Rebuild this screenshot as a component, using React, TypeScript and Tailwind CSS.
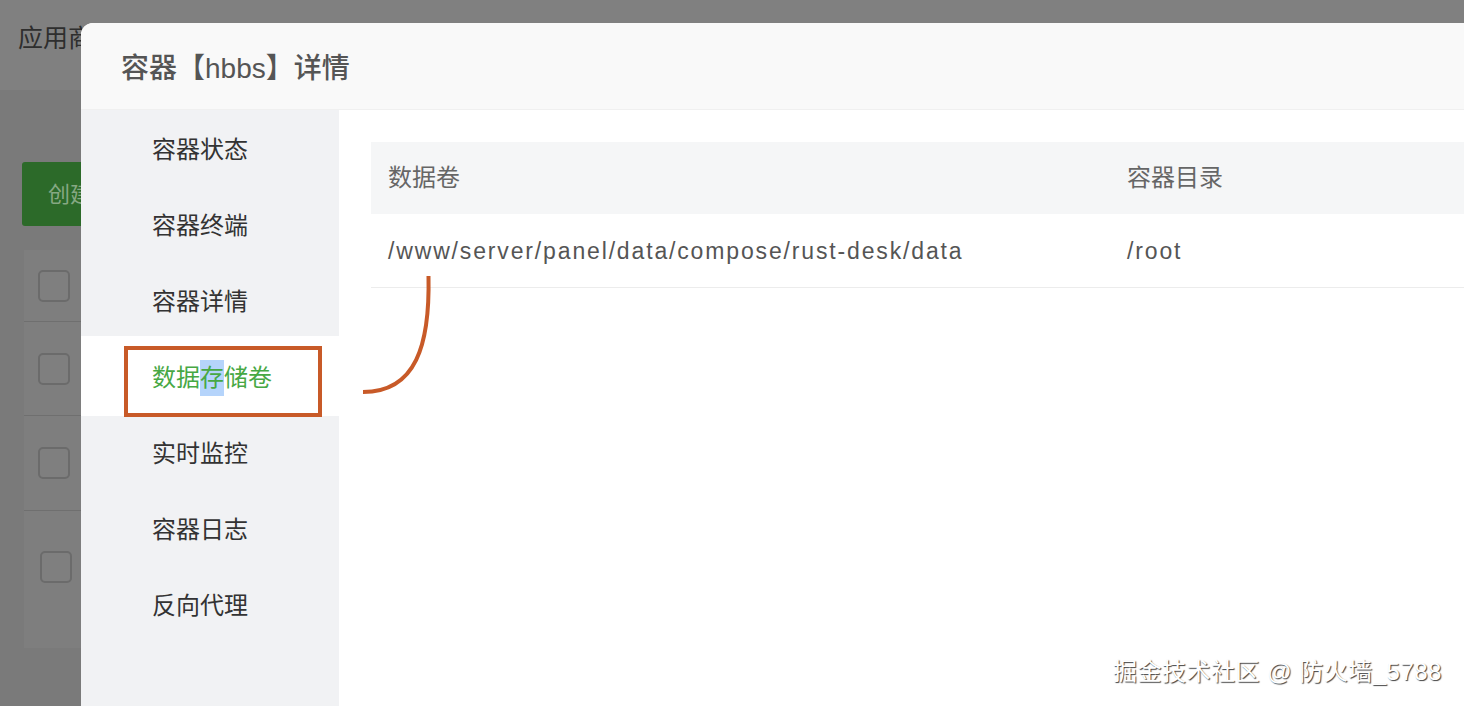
import React from "react";

const menu = ["容器状态", "容器终端", "容器详情", "数据存储卷", "实时监控", "容器日志", "反向代理"];

export default function App() {
  return (
    <div
      className="relative w-[1464px] h-[706px] overflow-hidden bg-[#7a7a7a]"
      style={{ fontFamily: '"Liberation Sans", "Noto Sans CJK SC", sans-serif' }}
    >
      {/* background page (dimmed) */}
      <div className="h-[90px] bg-[#808080] pl-[18px] pt-[20px] text-[25px] text-[#2e2e2e] whitespace-nowrap">应用商店</div>
      <div className="pl-[22px] pt-[72px]">
        <div className="w-[130px] h-[64px] rounded-[3px] bg-[#2c6a29] flex items-center pl-[26px] text-[22px] text-[#86a883] whitespace-nowrap">创建容器</div>
        <div className="mt-[24px] ml-[2px] w-[200px] bg-[#7e7e7e] h-[398px] flex flex-col">
          <div className="h-[72px] border-b border-[#6f6f6f] flex items-center pl-[14px]">
            <div className="w-[32px] h-[32px] rounded-[5px] border-2 border-[#6b6b6b] bg-[#7f7f7f]" />
          </div>
          <div className="h-[94px] border-b border-[#6f6f6f] flex items-center pl-[14px]">
            <div className="w-[32px] h-[32px] rounded-[5px] border-2 border-[#6b6b6b] bg-[#7f7f7f]" />
          </div>
          <div className="h-[95px] border-b border-[#6f6f6f] flex items-center pl-[14px]">
            <div className="w-[32px] h-[32px] rounded-[5px] border-2 border-[#6b6b6b] bg-[#7f7f7f]" />
          </div>
          <div className="h-[137px] flex items-start pt-[40px] pl-[16px]">
            <div className="w-[32px] h-[32px] rounded-[5px] border-2 border-[#6b6b6b] bg-[#7f7f7f]" />
          </div>
        </div>
      </div>

      {/* modal */}
      <div className="absolute left-[81px] top-[23px] right-0 bottom-0 rounded-tl-[12px] overflow-hidden bg-white flex flex-col">
        <div className="h-[87px] shrink-0 bg-[#f9f9f9] border-b border-[#f0f0f0] flex items-center pl-[40px] pt-[5px] text-[28px] font-medium text-[#555]">
          容器【hbbs】详情
        </div>
        <div className="flex flex-1">
          <div className="relative w-[258px] shrink-0 bg-[#f1f2f4]">
            {menu.map((m, i) =>
              i === 3 ? (
                <div key={m} className="h-[80px] -mt-[2px] -mb-[2px] bg-white flex items-center pl-[71px] pt-[3px] text-[24px] text-[#47a844]">
                  数据<span className="bg-[#b5d4fb]">存</span>储卷
                </div>
              ) : (
                <div key={m} className="h-[76px] flex items-center pl-[71px] pt-[3px] text-[24px] text-[#333]">
                  {m}
                </div>
              )
            )}
            <div className="absolute left-[43px] top-[236px] w-[198px] h-[71px] border-[4px] border-[#c85a28]" />
          </div>
          <div className="flex-1 pt-[32px] pl-[32px]">
            <div className="flex h-[72px] bg-[#f5f6f7] items-center text-[24px] text-[#666]">
              <div className="w-[739px] pl-[17px]">数据卷</div>
              <div className="pl-[17px]">容器目录</div>
            </div>
            <div className="flex h-[74px] items-center pt-[2px] border-b border-[#ececec] text-[23px] tracking-[1.85px] text-[#555]">
              <div className="w-[739px] pl-[17px] whitespace-nowrap">/www/server/panel/data/compose/rust-desk/data</div>
              <div className="pl-[17px]">/root</div>
            </div>
          </div>
        </div>
      </div>

      {/* annotation curve */}
      <svg className="absolute left-0 top-0 pointer-events-none" width="1464" height="706">
        <path d="M428.5 276 C430 345 416 392 363 392" fill="none" stroke="#c85a28" strokeWidth="4" strokeLinecap="butt" />
      </svg>

      {/* watermark */}
      <div className="absolute left-[1113px] top-[654px] text-[24px] tracking-[0.5px] whitespace-nowrap text-white [text-shadow:1px_1px_1px_rgba(0,0,0,0.75)]">
        掘金技术社区 @ 防火墙_5788
      </div>
    </div>
  );
}
